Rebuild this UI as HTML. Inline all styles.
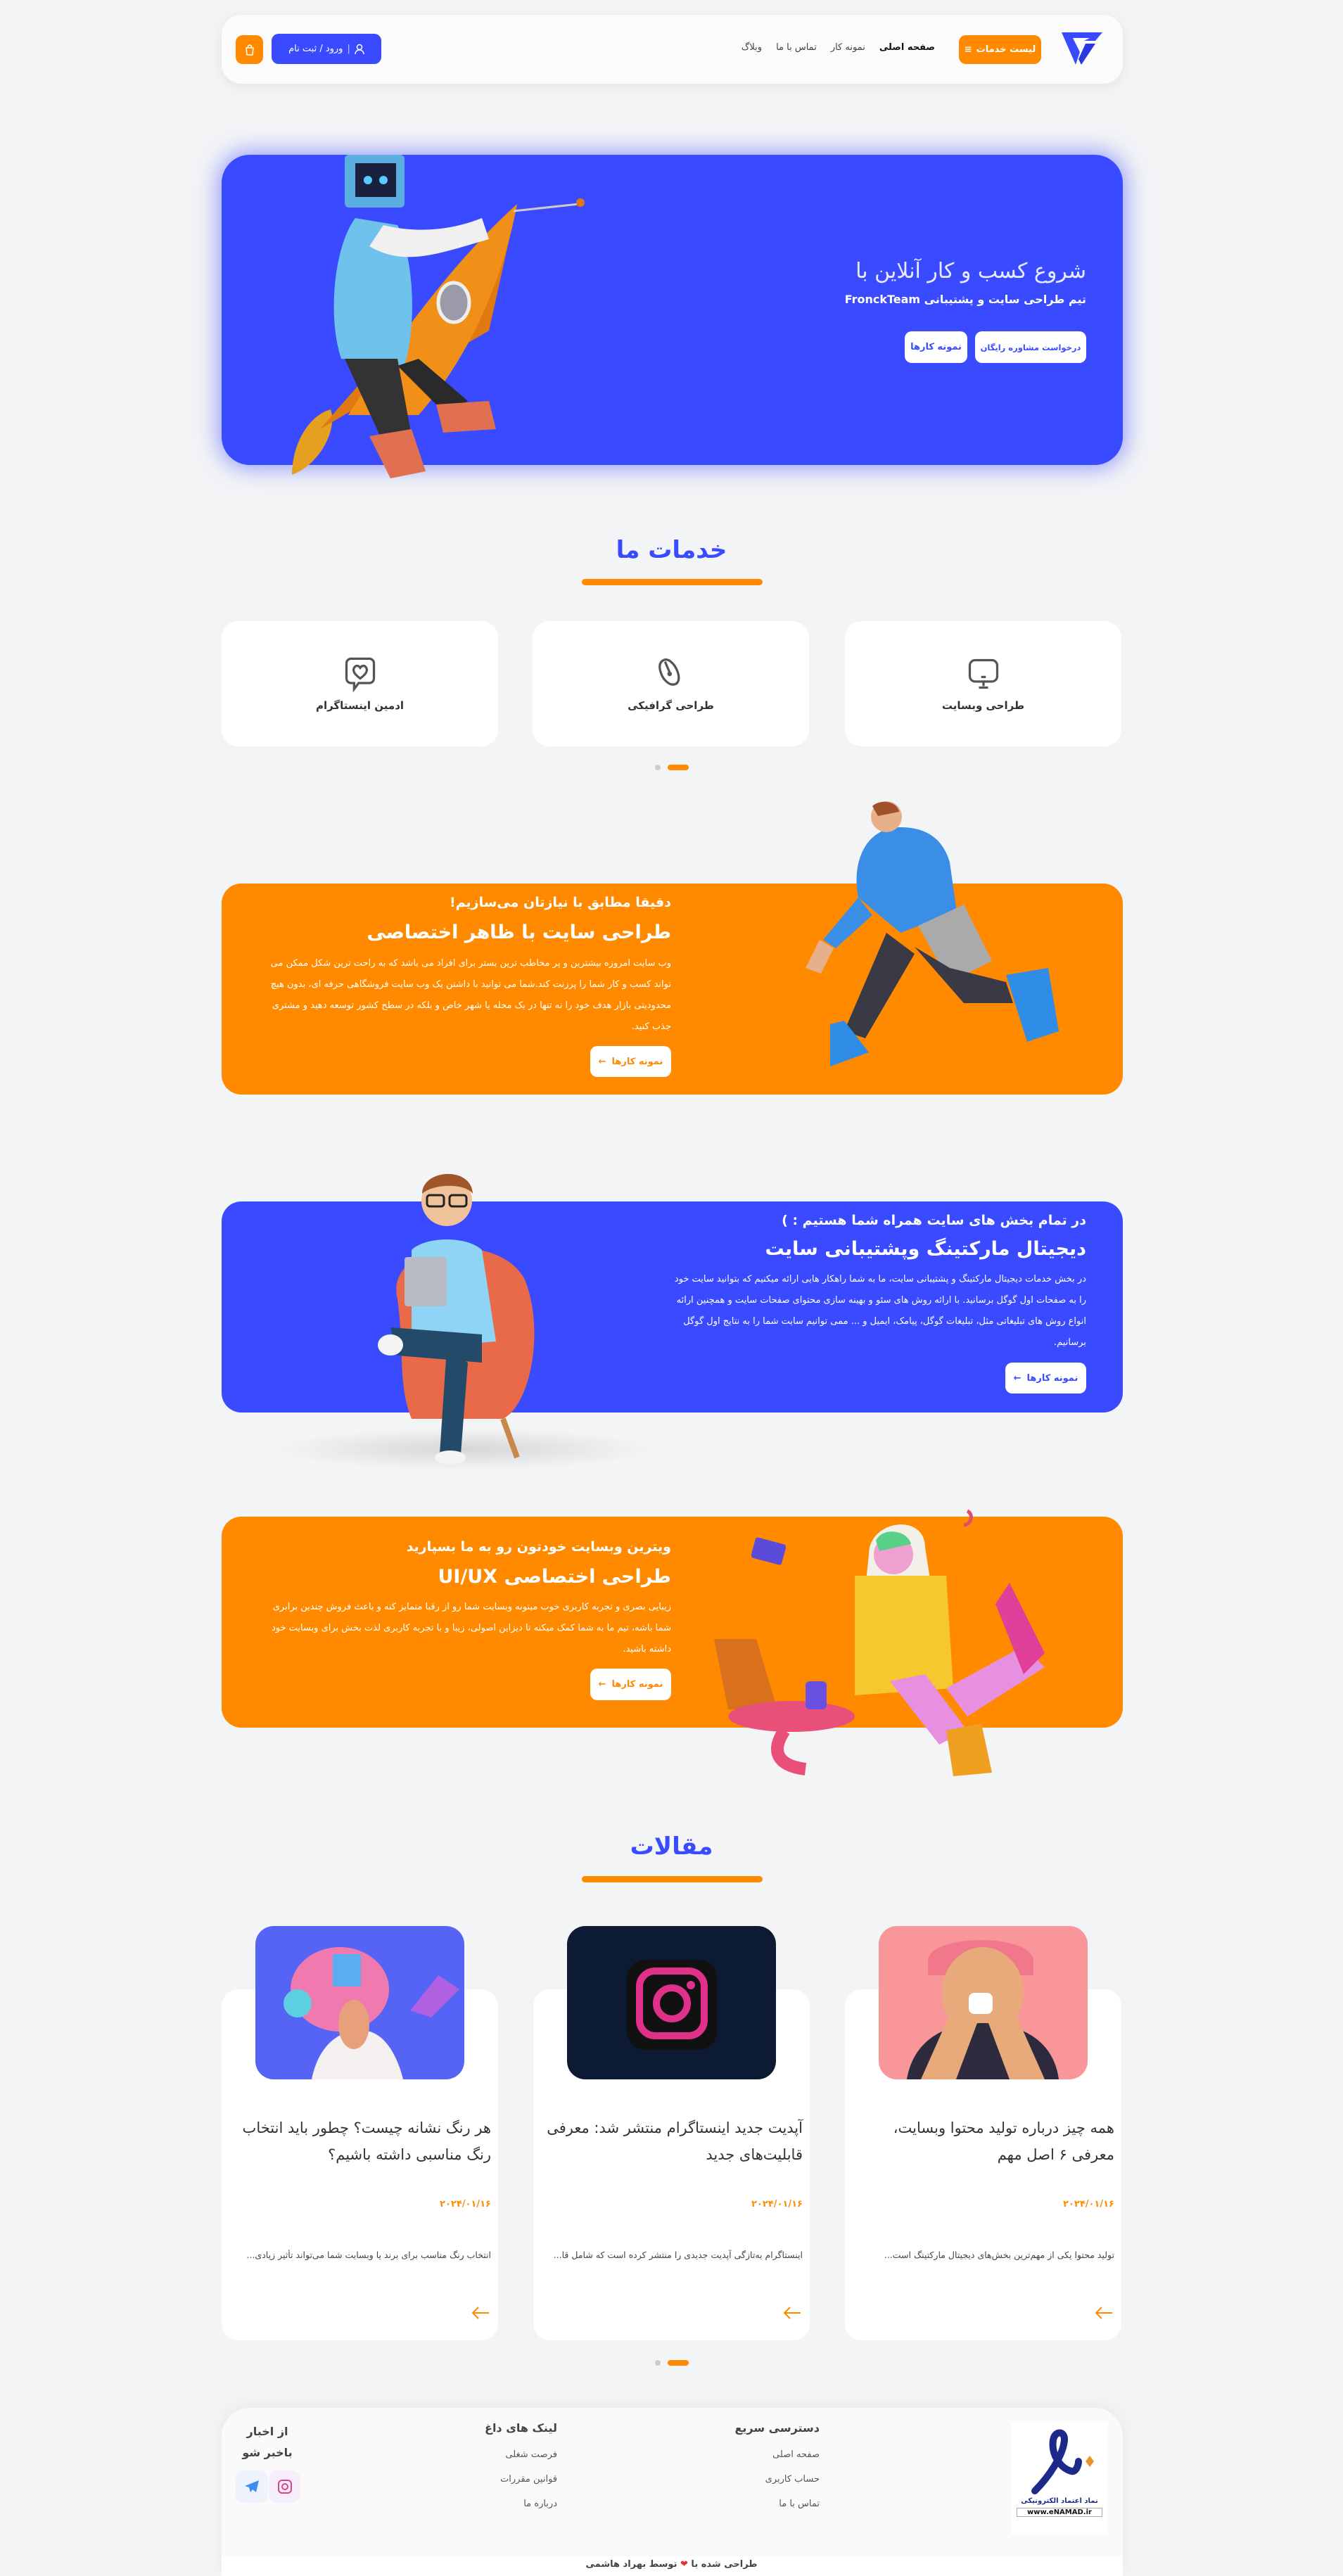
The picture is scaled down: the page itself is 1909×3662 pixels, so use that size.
<!DOCTYPE html>
<html lang="fa">
<head>
<meta charset="utf-8">
<style>
*{box-sizing:border-box;margin:0;padding:0}
body{width:1909px;height:3662px;background:#f3f4f6;font-family:"DejaVu Sans","Liberation Sans",sans-serif;position:relative;overflow:hidden;color:#333}
.abs{position:absolute}
.rtl{direction:rtl;text-align:right}
.header{left:315px;top:21px;width:1281px;height:98px;background:#fbfbfb;border-radius:28px;box-shadow:0 4px 18px rgba(0,0,0,.07)}
.nav a{color:#444;font-size:13px;text-decoration:none}
.btn-o{background:#ff8a00;color:#fff;border-radius:10px;font-size:13px;font-weight:bold;display:flex;align-items:center;justify-content:center;gap:6px}
.btn-b{background:#3a4bff;color:#fff;border-radius:10px;font-size:13px;display:flex;align-items:center;justify-content:center;gap:6px}
.hero{left:315px;top:220px;width:1281px;height:441px;background:#3a4bff;border-radius:40px;box-shadow:0 0 30px 6px rgba(80,95,255,.55)}
.wbtn{background:#fff;border-radius:10px;color:#3a4bff;font-size:13px;font-weight:bold;display:flex;align-items:center;justify-content:center;gap:8px;white-space:nowrap}
.h2{font-size:34px;font-weight:bold;color:#3a4bff;width:100%;text-align:center;left:0}
.uline{background:#ff8a00;border-radius:6px;height:9px;width:257px;left:827px}
.card{background:#fff;border-radius:24px}
.svc{top:883px;width:393px;height:178px;display:flex;flex-direction:column;align-items:center;justify-content:center;gap:10px;font-size:15px;font-weight:bold;color:#333}
.dot{border-radius:6px;height:8px}
.band{left:315px;width:1281px;height:300px;border-radius:28px}
.sub{font-size:19px;font-weight:bold;color:#fff}
.ttl{font-size:27px;font-weight:bold;color:#fff}
.par{font-size:13px;line-height:30px;color:#fff}
.art{top:2828px;width:393px;height:499px}
.art .img{position:absolute;left:48px;top:-90px;width:297px;height:218px;border-radius:26px;overflow:hidden}
.art .t{position:absolute;right:10px;left:10px;top:178px;font-size:21px;line-height:38px;color:#333;direction:rtl;text-align:right}
.art .d{position:absolute;right:10px;top:298px;font-size:13px;font-weight:bold;color:#ff8a00}
.art .e{position:absolute;right:10px;left:10px;top:370px;font-size:12.5px;color:#444;direction:rtl;text-align:right;white-space:nowrap;overflow:hidden}
.art .ar{position:absolute;right:12px;top:450px}
.footer{left:315px;top:3423px;width:1281px;height:239px;background:#fafafa;border-radius:40px 40px 0 0}
.fh{font-size:16px;font-weight:bold;color:#444}
.fl{font-size:13px;color:#555}
</style>
</head>
<body>

<div class="abs header"></div>
<svg class="abs" style="left:1507px;top:44px" width="62" height="50" viewBox="0 0 62 50"><path d="M2 2H60L50 14H34L42 10H18L28 30L22 48Z" fill="#3a4bff"/><path d="M36 18H50L30 48L26 40Z" fill="#2a38e0"/></svg>
<div class="abs btn-o" style="left:1363px;top:50px;width:117px;height:41px"><span>≡</span><span dir="rtl">لیست خدمات</span></div>
<div class="abs nav rtl" style="right:580px;top:60px;display:flex;gap:20px;direction:rtl">
<a style="color:#111;font-weight:bold">صفحه اصلی</a><a>نمونه کار</a><a>تماس با ما</a><a>وبلاگ</a></div>
<div class="abs btn-b" style="left:386px;top:48px;width:156px;height:43px"><span dir="rtl">ورود / ثبت نام</span><span style="opacity:.7">|</span><svg width="14" height="16" viewBox="0 0 14 16"><circle cx="7" cy="5" r="3.5" fill="none" stroke="#fff" stroke-width="1.5"/><path d="M1 15c0-4 3-6 6-6s6 2 6 6" fill="none" stroke="#fff" stroke-width="1.5"/></svg></div>
<div class="abs btn-o" style="left:335px;top:50px;width:39px;height:41px"><svg width="14" height="16" viewBox="0 0 14 16"><path d="M2 5h10l-1 10H3z" fill="none" stroke="#fff" stroke-width="1.5"/><path d="M4.5 5V3.5a2.5 2.5 0 015 0V5" fill="none" stroke="#fff" stroke-width="1.5"/></svg></div>

<div class="abs hero"></div>
<svg class="abs" style="left:395px;top:210px" width="450" height="480" viewBox="0 0 450 480">
<path d="M20 465C20 420 45 380 75 372C85 400 60 450 20 465Z" fill="#e6a020"/>
<path d="M60 400L340 80L300 260Z" fill="#e07a10"/>
<path d="M100 380C150 300 240 170 340 80C320 190 270 300 200 380Z" fill="#f09018"/>
<ellipse cx="250" cy="220" rx="22" ry="28" fill="#9a9aa8" stroke="#eee" stroke-width="5"/>
<line x1="335" y1="90" x2="428" y2="80" stroke="#ccc" stroke-width="3"/><circle cx="430" cy="78" r="6" fill="#e07a10"/>
<path d="M110 100C80 140 70 240 90 300L180 310C200 240 190 150 170 110Z" fill="#6fc2ec"/>
<path d="M130 140C180 170 230 150 300 130L290 100C240 120 190 120 150 110Z" fill="#f0f0f0"/>
<path d="M95 300L150 420L190 410L170 300Z" fill="#333"/>
<path d="M170 310L240 380L270 360L200 300Z" fill="#2a2a2a"/>
<path d="M130 410L190 400L210 460L160 470Z" fill="#e07050"/>
<path d="M225 365L300 360L310 400L235 405Z" fill="#e07050"/>
<rect x="95" y="10" width="85" height="75" rx="6" fill="#5aaee0"/><rect x="110" y="22" width="58" height="48" fill="#1a2040"/>
<circle cx="128" cy="46" r="6" fill="#5cf"/><circle cx="150" cy="46" r="6" fill="#5cf"/>
</svg>
<div class="abs rtl" style="right:365px;top:368px;font-size:30px;color:#e8eaff">شروع کسب و کار آنلاین با</div>
<div class="abs rtl" style="right:365px;top:416px;font-size:16px;font-weight:bold;color:#fff">تیم طراحی سایت و پشتیبانی FronckTeam</div>
<div class="abs wbtn" style="left:1386px;top:471px;width:158px;height:45px;font-size:11.5px" dir="rtl">درخواست مشاوره رایگان</div>
<div class="abs wbtn" style="left:1286px;top:471px;width:89px;height:45px" dir="rtl">نمونه کارها</div>

<div class="abs h2" style="top:762px">خدمات ما</div>
<div class="abs uline" style="top:823px"></div>
<div class="abs card svc" style="left:1201px"><svg width="52" height="52" viewBox="0 0 48 48" fill="none" stroke="#555" stroke-width="3"><rect x="6" y="6" width="36" height="28" rx="7"/><path d="M21 28h6M24 34v6M18 42h12"/></svg><span dir="rtl">طراحی وبسایت</span></div>
<div class="abs card svc" style="left:757px"><svg width="52" height="52" viewBox="0 0 48 48" fill="none" stroke="#555" stroke-width="3"><path d="M14 6c6-3 14 4 18 14s2 18-6 18c-5 0-12-6-15-14s-3-15 3-18z"/><path d="M16 8l6 14"/><circle cx="22" cy="24" r="1.5" fill="#555"/></svg><span dir="rtl">طراحی گرافیکی</span></div>
<div class="abs card svc" style="left:315px"><svg width="52" height="52" viewBox="0 0 48 48" fill="none" stroke="#555" stroke-width="3"><path d="M12 4h24a6 6 0 016 6v20a6 6 0 01-6 6H22l-6 8v-8h-4a6 6 0 01-6-6V10a6 6 0 016-6z"/><path d="M24 30c-8-6-10-10-8-14s6-3 8 0c2-3 6-4 8 0s0 8-8 14z"/></svg><span dir="rtl">ادمین اینستاگرام</span></div>
<div class="abs dot" style="left:931px;top:1087px;width:8px;background:#ccc"></div>
<div class="abs dot" style="left:949px;top:1087px;width:30px;background:#ff8a00"></div>

<div class="abs band" style="top:1256px;background:#ff8a00"></div>
<svg class="abs" style="left:1110px;top:1136px" width="420" height="480" viewBox="0 0 420 480">
<path d="M170 40C120 40 100 90 110 140L170 190L250 160L240 90C230 55 205 40 170 40Z" fill="#3a8ee6"/>
<circle cx="150" cy="25" r="22" fill="#e8b08a"/><path d="M130 10c10-10 35-8 38 8l-30 6z" fill="#a0502a"/>
<path d="M110 140L60 200L78 212L130 165Z" fill="#3a8ee6"/><path d="M55 200l-20 40 22 8 18-36z" fill="#e8b08a"/>
<path d="M195 180L260 150L300 230L240 260Z" fill="#aaa"/>
<path d="M150 190L90 330L120 340L190 220Z" fill="#3a3a46"/>
<path d="M190 210L260 290L330 290L320 260L240 240Z" fill="#3a3a46"/>
<path d="M70 320L90 315L125 360L70 380Z" fill="#2f8de8"/><path d="M320 250L380 240L395 330L350 345Z" fill="#2f8de8"/>
</svg>
<div class="abs rtl sub" style="right:955px;top:1272px">دقیقا مطابق با نیازتان می‌سازیم!</div>
<div class="abs rtl ttl" style="right:955px;top:1310px">طراحی سایت با ظاهر اختصاصی</div>
<div class="abs rtl par" style="right:955px;top:1355px;width:592px">وب سایت امروزه بیشترین و پر مخاطب ترین بستر برای افراد می باشد که به راحت ترین شکل ممکن می تواند کسب و کار شما را پرزنت کند.شما می توانید با داشتن یک وب سایت فروشگاهی حرفه ای، بدون هیچ محدودیتی بازار هدف خود را نه تنها در یک محله یا شهر خاص و بلکه در سطح کشور توسعه دهید و مشتری جذب کنید.</div>
<div class="abs wbtn" style="left:839px;top:1487px;width:115px;height:44px;color:#ff8a00" dir="rtl">نمونه کارها <span>←</span></div>

<div class="abs band" style="top:1708px;background:#3a4bff"></div>
<div class="abs" style="left:390px;top:2030px;width:540px;height:60px;border-radius:50%;background:radial-gradient(ellipse,rgba(0,0,0,.12),rgba(0,0,0,0) 70%)"></div>
<svg class="abs" style="left:385px;top:1617px" width="550" height="470" viewBox="0 0 550 470">
<path d="M180 230C160 150 320 130 360 200C390 270 370 380 330 400L200 400C180 350 190 300 180 230Z" fill="#e96a48"/>
<path d="M260 400l-20 60M330 400l20 55" stroke="#c8884a" stroke-width="8"/>
<path d="M200 160C220 140 280 140 300 160L320 290L200 300Z" fill="#8fd4f4"/>
<circle cx="250" cy="90" r="36" fill="#f0c29a"/><path d="M215 80c0-35 70-40 72 0c-10-15-55-15-72 0z" fill="#a0562a"/>
<rect x="222" y="82" width="24" height="16" rx="4" fill="none" stroke="#222" stroke-width="3"/><rect x="254" y="82" width="24" height="16" rx="4" fill="none" stroke="#222" stroke-width="3"/>
<rect x="190" y="170" width="60" height="70" rx="4" fill="#b8bcc4"/>
<path d="M170 270L300 280L300 320L180 310Z" fill="#234a68"/><path d="M250 300L280 320L270 450L240 450Z" fill="#234a68"/>
<ellipse cx="170" cy="295" rx="18" ry="15" fill="#f4f4f4"/><ellipse cx="255" cy="455" rx="22" ry="10" fill="#f4f4f4"/>
</svg>
<div class="abs rtl sub" style="right:365px;top:1724px">در تمام بخش های سایت همراه شما هستیم : )</div>
<div class="abs rtl ttl" style="right:365px;top:1760px">دیجیتال مارکتینگ وپشتیبانی سایت</div>
<div class="abs rtl par" style="right:365px;top:1804px;width:592px">در بخش خدمات دیجیتال مارکتینگ و پشتیبانی سایت، ما به شما راهکار هایی ارائه میکنیم که بتوانید سایت خود را به صفحات اول گوگل برسانید. با ارائه روش های سئو و بهینه سازی محتوای صفحات سایت و همچنین ارائه انواع روش های تبلیغاتی مثل، تبلیغات گوگل، پیامک، ایمیل و ... ممی توانیم سایت شما را به نتایج اول گوگل برسانیم.</div>
<div class="abs wbtn" style="left:1429px;top:1937px;width:115px;height:44px" dir="rtl">نمونه کارها <span>←</span></div>

<div class="abs band" style="top:2156px;background:#ff8a00"></div>
<svg class="abs" style="left:1015px;top:2140px" width="490" height="390" viewBox="0 0 490 390">
<rect x="55" y="50" width="45" height="30" rx="4" fill="#5a4bd8" transform="rotate(15 77 65)"/>
<path d="M360 8c10 5 5 20-5 20" fill="none" stroke="#e64a6a" stroke-width="5"/>
<path d="M220 70C220 20 300 10 300 60L330 250L200 260Z" fill="#f2f0e8"/>
<path d="M200 100L330 100L340 260L200 270Z" fill="#f6c72e"/>
<circle cx="255" cy="70" r="28" fill="#f0a0d0"/><path d="M230 50c10-20 45-15 50 5l-45 10z" fill="#58d088"/>
<path d="M330 260L440 200L470 230L360 300Z" fill="#e890e0"/><path d="M420 110L470 210L440 240L400 140Z" fill="#e0409a"/>
<path d="M250 250L320 340L360 320L300 240Z" fill="#e890e0"/><path d="M330 320L380 310L395 380L340 385Z" fill="#f0a020"/>
<path d="M0 190L60 190L90 290L20 290Z" fill="#d8701c"/>
<ellipse cx="110" cy="300" rx="90" ry="22" fill="#e8507a"/>
<path d="M100 320c-20 30-10 50 30 55" fill="none" stroke="#e8507a" stroke-width="18"/>
<rect x="130" y="250" width="30" height="40" rx="6" fill="#6a50e0"/>
</svg>
<div class="abs rtl sub" style="right:955px;top:2188px">ویترین وبسایت خودتون رو به ما بسپارید</div>
<div class="abs rtl ttl" style="right:955px;top:2226px">طراحی اختصاصی UI/UX</div>
<div class="abs rtl par" style="right:955px;top:2270px;width:592px">زیبایی بصری و تجربه کاربری خوب میتونه وبسایت شما رو از رقبا متمایز کنه و باعث فروش چندین برابری شما باشه، تیم ما به شما کمک میکنه تا دیزاین اصولی، زیبا و با تجربه کاربری لذت بخش برای وبسایت خود داشته باشید.</div>
<div class="abs wbtn" style="left:839px;top:2372px;width:115px;height:45px;color:#ff8a00" dir="rtl">نمونه کارها <span>←</span></div>

<div class="abs h2" style="top:2605px">مقالات</div>
<div class="abs uline" style="top:2667px"></div>

<div class="abs card art" style="left:1201px">
<div class="img" style="background:#f8969a"><svg width="297" height="218" viewBox="0 0 297 218"><path d="M70 50c0-40 150-40 150 0v20H70z" fill="#f0788a"/><ellipse cx="148" cy="95" rx="58" ry="65" fill="#e8aa7a"/><path d="M40 218c10-60 60-80 108-80s100 20 108 80z" fill="#2c2a3c"/><rect x="128" y="95" width="34" height="30" rx="8" fill="#fff"/><path d="M60 218l40-90 40 10-30 80z M236 218l-40-90-40 10 30 80z" fill="#e8aa7a"/></svg></div>
<div class="t">همه چیز درباره تولید محتوا وبسایت، معرفی ۶ اصل مهم</div>
<div class="d">۲۰۲۴/۰۱/۱۶</div>
<div class="e">تولید محتوا یکی از مهم‌ترین بخش‌های دیجیتال مارکتینگ است...</div>
<div class="ar"><svg width="26" height="20" viewBox="0 0 26 20" fill="none" stroke="#ff8a00" stroke-width="2"><path d="M25 10H2M10 2L2 10l8 8"/></svg></div>
</div>

<div class="abs card art" style="left:758px">
<div class="img" style="background:#0d1a33"><svg width="297" height="218" viewBox="0 0 297 218"><rect x="85" y="48" width="128" height="128" rx="26" fill="#111"/><rect x="103" y="64" width="92" height="92" rx="22" fill="none" stroke="#e0308a" stroke-width="10"/><circle cx="149" cy="110" r="22" fill="none" stroke="#e0308a" stroke-width="10"/><circle cx="176" cy="84" r="6" fill="#e0308a"/></svg></div>
<div class="t">آپدیت جدید اینستاگرام منتشر شد: معرفی قابلیت‌های جدید</div>
<div class="d">۲۰۲۴/۰۱/۱۶</div>
<div class="e">اینستاگرام به‌تازگی آپدیت جدیدی را منتشر کرده است که شامل قا...</div>
<div class="ar"><svg width="26" height="20" viewBox="0 0 26 20" fill="none" stroke="#ff8a00" stroke-width="2"><path d="M25 10H2M10 2L2 10l8 8"/></svg></div>
</div>

<div class="abs card art" style="left:315px">
<div class="img" style="background:#5664f5"><svg width="297" height="218" viewBox="0 0 297 218"><ellipse cx="120" cy="90" rx="70" ry="60" fill="#f07ab0"/><circle cx="60" cy="110" r="20" fill="#5cd0e0"/><rect x="110" y="40" width="40" height="46" fill="#5aaef0"/><path d="M80 218c10-50 40-70 70-70s50 30 60 70z" fill="#f4f0f0"/><path d="M220 120l40-50 30 20-40 40z" fill="#b060e0"/><ellipse cx="140" cy="140" rx="22" ry="35" fill="#e8a07a"/></svg></div>
<div class="t">هر رنگ نشانه چیست؟ چطور باید انتخاب رنگ مناسبی داشته باشیم؟</div>
<div class="d">۲۰۲۴/۰۱/۱۶</div>
<div class="e">انتخاب رنگ مناسب برای برند یا وبسایت شما می‌تواند تأثیر زیادی...</div>
<div class="ar"><svg width="26" height="20" viewBox="0 0 26 20" fill="none" stroke="#ff8a00" stroke-width="2"><path d="M25 10H2M10 2L2 10l8 8"/></svg></div>
</div>
<div class="abs dot" style="left:931px;top:3355px;width:8px;background:#ccc"></div>
<div class="abs dot" style="left:949px;top:3355px;width:30px;background:#ff8a00"></div>

<div class="abs footer" style="box-shadow:0 -4px 20px rgba(0,0,0,.05)"></div>
<div class="abs" style="left:1437px;top:3443px;width:138px;height:160px;background:#fff;text-align:center">
<svg width="110" height="95" viewBox="0 0 110 95" style="margin-top:8px"><path d="M20 90C40 70 60 40 62 18c1-14-14-14-16 0-3 20 10 40 26 44 6 2 10-8 10-14" fill="none" stroke="#1e2a8a" stroke-width="10" stroke-linecap="round"/><path d="M98 40l6 8-6 8-6-8z" fill="#e8962a"/></svg>
<div dir="rtl" style="font-size:10px;font-weight:bold;color:#1e2a8a">نماد اعتماد الکترونیکی</div>
<div style="font-size:10px;font-weight:bold;border:1px solid #aaa;margin:4px 8px;color:#111">www.eNAMAD.ir</div>
</div>
<div class="abs rtl fh" style="right:744px;top:3442px">دسترسی سریع</div>
<div class="abs rtl fl" style="right:744px;top:3482px">صفحه اصلی</div>
<div class="abs rtl fl" style="right:744px;top:3517px">حساب کاربری</div>
<div class="abs rtl fl" style="right:744px;top:3552px">تماس با ما</div>
<div class="abs rtl fh" style="right:1117px;top:3442px">لینک های داغ</div>
<div class="abs rtl fl" style="right:1117px;top:3482px">فرصت شغلی</div>
<div class="abs rtl fl" style="right:1117px;top:3517px">قوانین مقررات</div>
<div class="abs rtl fl" style="right:1117px;top:3552px">درباره ما</div>
<div class="abs fh" dir="rtl" style="left:335px;top:3442px;width:90px;text-align:center;line-height:30px">از اخبار باخبر شو</div>
<div class="abs" style="left:335px;top:3512px;width:46px;height:46px;border-radius:12px;background:#eef3fb;display:flex;align-items:center;justify-content:center"><svg width="24" height="22" viewBox="0 0 24 22"><path d="M22 2L2 10l6 2 2 7 3-4 5 4z" fill="#3d8ef0"/></svg></div>
<div class="abs" style="left:382px;top:3512px;width:45px;height:46px;border-radius:12px;background:#f7eefb;display:flex;align-items:center;justify-content:center"><svg width="22" height="22" viewBox="0 0 22 22" fill="none" stroke="#e0408a" stroke-width="2"><rect x="2" y="2" width="18" height="18" rx="5"/><circle cx="11" cy="11" r="4"/></svg></div>
<div class="abs" style="left:315px;top:3634px;width:1281px;height:28px;background:#fff"></div>
<div class="abs" dir="rtl" style="left:0;width:1909px;top:3638px;text-align:center;font-size:13px;font-weight:bold;color:#444">طراحی شده با <span style="color:#e63030">❤</span> توسط بهراد هاشمی</div>
</body>
</html>
